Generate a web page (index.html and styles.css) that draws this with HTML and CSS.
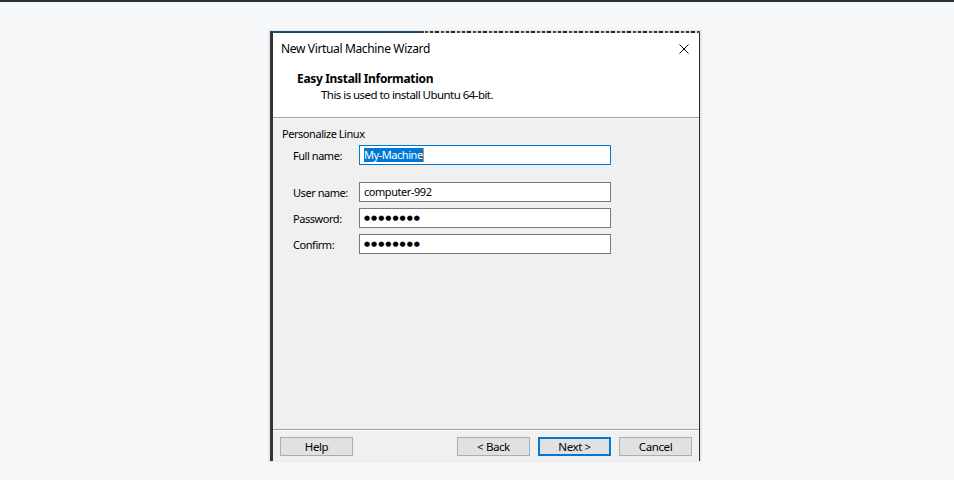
FILE: index.html
```html
<!DOCTYPE html>
<html>
<head>
<meta charset="utf-8">
<link rel="stylesheet" href="styles.css">
</head>
<body>
<div class="topline"></div>
<div class="frame">
  <div class="band"></div>
  <div class="window">
    <div class="header">
      <div class="titlebar">
        <span class="title">New Virtual Machine Wizard</span>
        <svg class="close" width="10" height="10" viewBox="0 0 10 10"><path d="M0.5 0.5 L9.5 9.5 M9.5 0.5 L0.5 9.5" stroke="#000" stroke-width="1" fill="none"/></svg>
      </div>
      <div class="heading">Easy Install Information</div>
      <div class="subheading">This is used to install Ubuntu 64-bit.</div>
    </div>
    <div class="content">
      <div class="group">Personalize Linux</div>
      <div class="form">
        <div class="label">Full name:</div>
        <div class="field focused"><span class="sel">My-Machine</span></div>
        <div class="label spaced">User name:</div>
        <div class="field spaced">computer-992</div>
        <div class="label">Password:</div>
        <div class="field"><span class="dots">●●●●●●●●</span></div>
        <div class="label">Confirm:</div>
        <div class="field"><span class="dots">●●●●●●●●</span></div>
      </div>
    </div>
    <div class="footer">
      <button class="btn">Help</button>
      <div class="spacer"></div>
      <button class="btn">&lt; Back</button>
      <button class="btn primary">Next &gt;</button>
      <button class="btn">Cancel</button>
    </div>
  </div>
</div>
</body>
</html>
```
FILE: styles.css
```css
html, body {
  margin: 0;
  padding: 0;
}
body {
  background: #f6f7f9;
  font-family: "Noto Sans", "Open Sans", sans-serif;
  font-size: 11px;
  letter-spacing: -0.45px;
  color: #000;
  height: 480px;
  overflow: hidden;
}
.topline {
  height: 2px;
  background: #2b3037;
}
.frame {
  margin: 28px 0 0 268px;
  width: 434px;
  box-sizing: border-box;
  padding: 1px 2px 1px 2px;
  background: #e6e8eb;
}
.band {
  height: 2px;
  background:
    linear-gradient(to right, #1d4a6e 0, #1d4a6e 154px, transparent 154px),
    repeating-linear-gradient(90deg, #3a2f26 0 3px, #cfc6b8 3px 5px, #262422 5px 9px, #e3ded6 9px 11px, #5a4a3c 11px 14px, #d8d2c8 14px 16px);
}
.window {
  height: 428px;
  border-left: 3px solid #333333;
  border-right: 1px solid #2c2c2c;
  background: #f0f0f0;
  display: flex;
  flex-direction: column;
}
.header {
  background: #fff;
  height: 84px;
  border-bottom: 1px solid #a0a0a0;
  box-shadow: 0 1px 0 #ffffff;
}
.titlebar {
  display: flex;
  align-items: center;
  justify-content: space-between;
  padding: 8px 10px 0 8px;
  line-height: 16px;
}
.title {
  font-size: 12px;
  letter-spacing: -0.35px;
}
.close {
  display: block;
}
.heading {
  font-size: 12px;
  font-weight: bold;
  letter-spacing: -0.33px;
  padding-left: 24px;
  margin-top: 14px;
  line-height: 16px;
}
.subheading {
  padding-left: 48px;
  line-height: 16px;
  font-size: 11.5px;
  letter-spacing: -0.55px;
}
.content {
  flex: 1;
  padding: 7px 0 0 9px;
  margin-top: 1px;
}
.group {
  line-height: 16px;
}
.form {
  display: grid;
  grid-template-columns: 77px 252px;
  row-gap: 6px;
  margin-top: 3px;
  align-items: center;
}
.label {
  padding-left: 11px;
}
.spaced {
  margin-top: 11px;
}
.field {
  height: 20px;
  box-sizing: border-box;
  border: 1px solid #7a7a7a;
  background: #fff;
  padding: 0 0 0 4px;
  line-height: 18px;
  display: flex;
  align-items: center;
}
.field.focused {
  border-color: #0078d7;
}
.sel {
  background: #0078d7;
  color: #fff;
  line-height: 14px;
  border-right: 1px solid #e8892f;
}
.dots {
  font-family: "DejaVu Sans", sans-serif;
  font-size: 7px;
  letter-spacing: 1px;
  line-height: 14px;
}
.footer {
  border-top: 1px solid #a0a0a0;
  box-shadow: inset 0 1px 0 #ffffff;
  height: 32px;
  box-sizing: border-box;
  padding: 7px 7px 0 7px;
  display: flex;
  align-items: flex-start;
  gap: 8px;
}
.spacer {
  flex: 1;
}
.btn {
  width: 73px;
  height: 19px;
  box-sizing: border-box;
  border: 1px solid #adadad;
  background: #e1e1e1;
  font-family: inherit;
  font-size: 11.5px;
  letter-spacing: -0.4px;
  color: #000;
  padding: 0;
  margin: 0;
  line-height: 16px;
}
.btn.primary {
  border: 2px solid #0078d7;
}
```
